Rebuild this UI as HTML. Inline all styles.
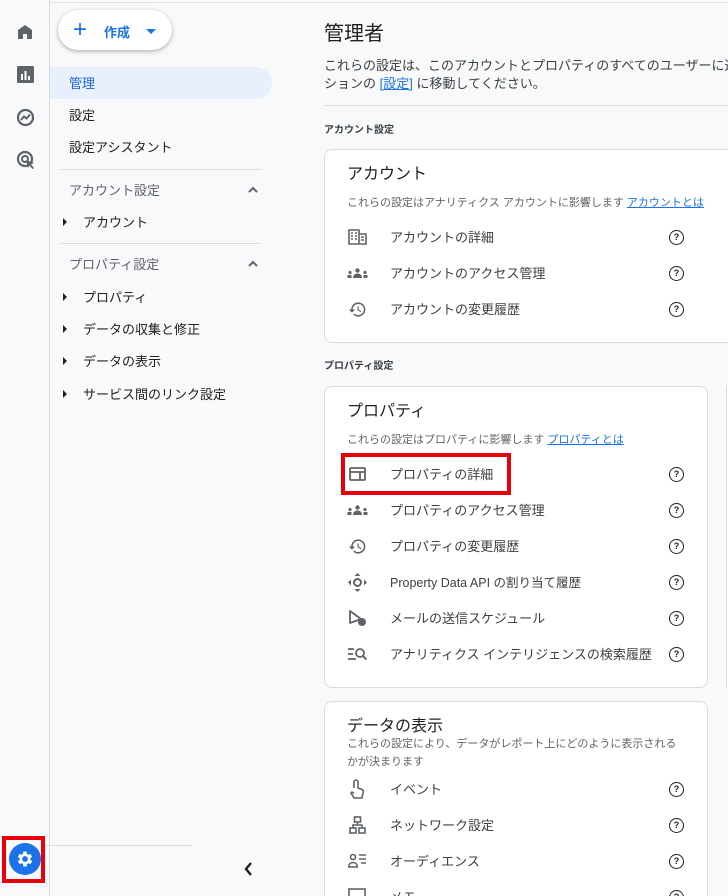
<!DOCTYPE html>
<html style="width:728px;height:896px;overflow:hidden"><head><meta charset="utf-8"><style>
*{margin:0;padding:0;box-sizing:border-box}
body{width:728px;height:896px;overflow:hidden;background:#f8f9fa;font-family:"Liberation Sans","Noto Sans CJK JP",sans-serif;color:#202124;position:relative}
.a{position:absolute;white-space:nowrap}
.rail{left:0;top:0;width:50px;height:896px;border-right:1px solid #dadce0;background:#f8f9fa}
.topline{left:0;top:0;width:728px;height:3px;border-bottom:1px solid #e3e3e3}
.s{font-size:13px;line-height:16px;margin-top:1px}
.g{color:#5f6368}
.tri{width:0;height:0;border-top:4px solid transparent;border-bottom:4px solid transparent;border-left:4px solid #202124}
.card{background:#fff;border:1px solid #dadce0;border-radius:8px}
.row{font-size:13px;color:#3c4043;line-height:16px;margin-top:1px}
.help{width:15px;height:15px;border:1.7px solid #202124;border-radius:50%;font-size:9px;font-weight:bold;text-align:center;line-height:12px;color:#202124;background:#fff}
</style></head><body>
<div class="a topline"></div>
<div class="a rail"></div>
<svg class="a" style="left:16px;top:23px" width="18" height="18" viewBox="0 0 18 18"><path d="M9 2 L2 7 V16 H7 V11 H11 V16 H16 V7 Z" fill="#5f6368"/></svg>
<svg class="a" style="left:17px;top:66px" width="17" height="17" viewBox="0 0 17 17"><rect x="0" y="0" width="17" height="17" rx="1.5" fill="#5f6368"/><rect x="4" y="8" width="2" height="6" fill="#fff"/><rect x="7.5" y="5" width="2" height="9" fill="#fff"/><rect x="11" y="10" width="2" height="4" fill="#fff"/></svg>
<svg class="a" style="left:16px;top:108px" width="19" height="19" viewBox="0 0 19 19"><circle cx="9.5" cy="9.5" r="7.5" fill="none" stroke="#5f6368" stroke-width="2.2"/><path d="M5 12 L8 8.5 L10.5 10.5 L14 6.5" fill="none" stroke="#5f6368" stroke-width="2"/></svg>
<svg class="a" style="left:16px;top:150px" width="20" height="20" viewBox="0 0 20 20"><circle cx="9" cy="9" r="7" fill="none" stroke="#5f6368" stroke-width="2.2"/><circle cx="9" cy="9" r="3" fill="none" stroke="#5f6368" stroke-width="2"/><path d="M10 10 L18 13 L15 14.5 L18 18 L16.5 19 L13.5 15.5 L12 18 Z" fill="#5f6368"/></svg>
<div class="a" style="left:2px;top:836px;width:43px;height:47px;border:4px solid #e8000b"></div>
<div class="a" style="left:9px;top:843px;width:32px;height:32px;border-radius:50%;background:#1a73e8"></div>
<svg class="a" style="left:15px;top:849px" width="20" height="20" viewBox="0 0 24 24"><path fill="#fff" d="M19.4 13a7.5 7.5 0 000-2l2.1-1.6-2-3.5-2.5 1a7 7 0 00-1.7-1L15 3h-4l-.4 2.9a7 7 0 00-1.7 1l-2.5-1-2 3.5L6.6 11a7.5 7.5 0 000 2l-2.1 1.6 2 3.5 2.5-1a7 7 0 001.7 1L11 21h4l.4-2.9a7 7 0 001.7-1l2.5 1 2-3.5zM13 15.5a3.5 3.5 0 110-7 3.5 3.5 0 010 7z" transform="translate(-1 0)"/></svg>
<div class="a" style="left:58px;top:10px;width:114px;height:40px;border-radius:20px;background:#fff;box-shadow:0 1px 3px rgba(60,64,67,.3),0 2px 6px rgba(60,64,67,.15)"></div>
<div class="a" style="left:73px;top:18px;font-size:24px;line-height:24px;color:#1a73e8;font-weight:300">+</div>
<div class="a" style="left:104px;top:22px;font-size:13px;color:#1a73e8;font-weight:bold">作成</div>
<div class="a" style="left:146px;top:29px;width:0;height:0;border-left:5px solid transparent;border-right:5px solid transparent;border-top:5px solid #1a73e8"></div>
<div class="a" style="left:50px;top:67px;width:222px;height:32px;background:#e8f0fe;border-radius:0 16px 16px 0"></div>
<div class="a s" style="left:69px;top:75px;color:#1967d2">管理</div>
<div class="a s" style="left:69px;top:107px">設定</div>
<div class="a s" style="left:69px;top:139px">設定アシスタント</div>
<div class="a" style="left:61px;top:169px;width:200px;border-top:1px solid #dadce0"></div>
<div class="a s g" style="left:69px;top:182px">アカウント設定</div>
<svg class="a" style="left:248px;top:186px" width="10" height="7" viewBox="0 0 10 7"><path d="M1 6 L5 2 L9 6" fill="none" stroke="#5f6368" stroke-width="2"/></svg>
<div class="a tri" style="left:63px;top:218px"></div>
<div class="a s" style="left:83px;top:214px">アカウント</div>
<div class="a" style="left:61px;top:243px;width:200px;border-top:1px solid #dadce0"></div>
<div class="a s g" style="left:69px;top:256px">プロパティ設定</div>
<svg class="a" style="left:248px;top:260px" width="10" height="7" viewBox="0 0 10 7"><path d="M1 6 L5 2 L9 6" fill="none" stroke="#5f6368" stroke-width="2"/></svg>
<div class="a tri" style="left:63px;top:293px"></div><div class="a s" style="left:83px;top:289px">プロパティ</div>
<div class="a tri" style="left:63px;top:325px"></div><div class="a s" style="left:83px;top:321px">データの収集と修正</div>
<div class="a tri" style="left:63px;top:357px"></div><div class="a s" style="left:83px;top:353px">データの表示</div>
<div class="a tri" style="left:63px;top:390px"></div><div class="a s" style="left:83px;top:386px">サービス間のリンク設定</div>
<div class="a" style="left:45px;top:845px;width:148px;border-top:1px solid #dadce0"></div>
<svg class="a" style="left:243px;top:862px" width="10" height="14" viewBox="0 0 10 14"><path d="M8 1 L3 7 L8 13" fill="none" stroke="#202124" stroke-width="2.4"/></svg>
<div class="a" style="left:324px;top:22px;font-size:20px;line-height:24px">管理者</div>
<div class="a" style="left:324px;top:57px;font-size:13px;line-height:18px;color:#3c4043">これらの設定は、このアカウントとプロパティのすべてのユーザーに適用<br>ションの <span style="color:#1a73e8;text-decoration:underline">[設定]</span> に移動してください。</div>
<div class="a" style="left:324px;top:105px;width:404px;border-top:1px solid #dadce0"></div>
<div class="a" style="left:324px;top:121px;font-size:10px;font-weight:bold;color:#3c4043">アカウント設定</div>
<div class="a card" style="left:324px;top:149px;width:420px;height:194px"></div>
<div class="a" style="left:347px;top:165px;font-size:16px;line-height:20px">アカウント</div>
<div class="a" style="left:347px;top:194px;font-size:11px;color:#5f6368">これらの設定はアナリティクス アカウントに影響します <span style="color:#1a73e8;text-decoration:underline">アカウントとは</span></div>
<svg class="a" style="left:348px;top:229px" width="19" height="16" viewBox="0 0 19 16"><path d="M1 1h10v14H1z M11 5h7v10h-7z" fill="none" stroke="#5f6368" stroke-width="1.6"/><path d="M3 4h2M7 4h2M3 7h2M7 7h2M3 10h2M7 10h2M13 8h3M13 11h3" stroke="#5f6368" stroke-width="1.6"/></svg>
<div class="a row" style="left:390px;top:229px">アカウントの詳細</div>
<svg class="a" style="left:347px;top:268px" width="21" height="10" viewBox="0 0 21 10"><circle cx="10.5" cy="2.5" r="2.2" fill="#5f6368"/><path d="M6 10c0-3 2-4.5 4.5-4.5S15 7 15 10z" fill="#5f6368"/><circle cx="3" cy="4.5" r="1.6" fill="#5f6368"/><circle cx="18" cy="4.5" r="1.6" fill="#5f6368"/><rect x="0.5" y="7" width="4" height="3" fill="#5f6368"/><rect x="16.5" y="7" width="4" height="3" fill="#5f6368"/></svg>
<div class="a row" style="left:390px;top:265px">アカウントのアクセス管理</div>
<svg class="a" style="left:348px;top:300px" width="19" height="19" viewBox="0 0 24 24"><path d="M13 3a9 9 0 00-9 9H1l4 4 4-4H6a7 7 0 117 7 7 7 0 01-5-2l-1.4 1.4A9 9 0 1013 3zm-1 5v5l4.3 2.5.7-1.2-3.5-2.1V8z" fill="#5f6368"/></svg>
<div class="a row" style="left:390px;top:301px">アカウントの変更履歴</div>
<div class="a help" style="left:669px;top:230px">?</div>
<div class="a help" style="left:669px;top:266px">?</div>
<div class="a help" style="left:669px;top:302px">?</div>
<div class="a" style="left:324px;top:357px;font-size:10px;font-weight:bold;color:#3c4043">プロパティ設定</div>
<div class="a card" style="left:324px;top:386px;width:384px;height:302px"></div>
<div class="a" style="left:726px;top:386px;width:10px;height:302px;border-left:1px solid #dadce0;background:#fff"></div>
<div class="a" style="left:347px;top:402px;font-size:16px;line-height:20px">プロパティ</div>
<div class="a" style="left:347px;top:431px;font-size:11px;color:#5f6368">これらの設定はプロパティに影響します <span style="color:#1a73e8;text-decoration:underline">プロパティとは</span></div>
<div class="a" style="left:341px;top:453px;width:170px;height:42px;border:4px solid #e8000b"></div>
<svg class="a" style="left:349px;top:467px" width="17" height="14" viewBox="0 0 17 14"><rect x="1" y="1" width="15" height="12" rx="1" fill="none" stroke="#5f6368" stroke-width="1.8"/><path d="M1 5h15M11 5v8" stroke="#5f6368" stroke-width="1.8"/></svg>
<div class="a row" style="left:390px;top:466px">プロパティの詳細</div>
<svg class="a" style="left:347px;top:505px" width="21" height="10" viewBox="0 0 21 10"><circle cx="10.5" cy="2.5" r="2.2" fill="#5f6368"/><path d="M6 10c0-3 2-4.5 4.5-4.5S15 7 15 10z" fill="#5f6368"/><circle cx="3" cy="4.5" r="1.6" fill="#5f6368"/><circle cx="18" cy="4.5" r="1.6" fill="#5f6368"/><rect x="0.5" y="7" width="4" height="3" fill="#5f6368"/><rect x="16.5" y="7" width="4" height="3" fill="#5f6368"/></svg>
<div class="a row" style="left:390px;top:502px">プロパティのアクセス管理</div>
<svg class="a" style="left:348px;top:537px" width="19" height="19" viewBox="0 0 24 24"><path d="M13 3a9 9 0 00-9 9H1l4 4 4-4H6a7 7 0 117 7 7 7 0 01-5-2l-1.4 1.4A9 9 0 1013 3zm-1 5v5l4.3 2.5.7-1.2-3.5-2.1V8z" fill="#5f6368"/></svg>
<div class="a row" style="left:390px;top:538px">プロパティの変更履歴</div>
<svg class="a" style="left:348px;top:573px" width="19" height="19" viewBox="0 0 19 19"><path d="M9.5 0l3 3h-6zM9.5 19l3-3h-6zM0 9.5l3-3v6zM19 9.5l-3-3v6z" fill="#5f6368"/><circle cx="9.5" cy="9.5" r="3.5" fill="none" stroke="#5f6368" stroke-width="2"/></svg>
<div class="a row" style="left:390px;top:574px;font-size:12.5px">Property Data API の割り当て履歴</div>
<svg class="a" style="left:348px;top:609px" width="19" height="18" viewBox="0 0 19 18"><path d="M2 2v12l11-4z" fill="none" stroke="#5f6368" stroke-width="1.8" stroke-linejoin="round"/><circle cx="14" cy="13" r="4" fill="#5f6368"/></svg>
<div class="a row" style="left:390px;top:610px">メールの送信スケジュール</div>
<svg class="a" style="left:348px;top:647px" width="19" height="14" viewBox="0 0 19 14"><path d="M0 2h6M0 7h5M0 12h8" stroke="#5f6368" stroke-width="1.8"/><circle cx="12" cy="6" r="4" fill="none" stroke="#5f6368" stroke-width="1.8"/><path d="M15 9l3.5 3.5" stroke="#5f6368" stroke-width="2"/></svg>
<div class="a row" style="left:390px;top:646px">アナリティクス インテリジェンスの検索履歴</div>
<div class="a help" style="left:669px;top:467px">?</div>
<div class="a help" style="left:669px;top:503px">?</div>
<div class="a help" style="left:669px;top:539px">?</div>
<div class="a help" style="left:669px;top:575px">?</div>
<div class="a help" style="left:669px;top:611px">?</div>
<div class="a help" style="left:669px;top:647px">?</div>
<div class="a card" style="left:324px;top:701px;width:384px;height:210px"></div>
<div class="a" style="left:347px;top:717px;font-size:16px;line-height:20px">データの表示</div>
<div class="a" style="left:347px;top:735px;font-size:11px;line-height:18px;color:#5f6368">これらの設定により、データがレポート上にどのように表示される<br>かが決まります</div>
<svg class="a" style="left:349px;top:779px" width="16" height="20" viewBox="0 0 16 20"><path d="M5 9V3a2 2 0 014 0v6l4 1.5c1 .5 1.5 1.5 1.3 2.5L13 19H5l-3-5 1-1 2 1.5" fill="none" stroke="#5f6368" stroke-width="1.6"/></svg>
<div class="a row" style="left:390px;top:781px">イベント</div>
<svg class="a" style="left:349px;top:816px" width="17" height="18" viewBox="0 0 17 18"><rect x="5.5" y="1" width="6" height="5" fill="none" stroke="#5f6368" stroke-width="1.6"/><rect x="1" y="12" width="6" height="5" fill="none" stroke="#5f6368" stroke-width="1.6"/><rect x="10" y="12" width="6" height="5" fill="none" stroke="#5f6368" stroke-width="1.6"/><path d="M8.5 6v3M4 12V9h9v3" fill="none" stroke="#5f6368" stroke-width="1.6"/></svg>
<div class="a row" style="left:390px;top:817px">ネットワーク設定</div>
<svg class="a" style="left:348px;top:853px" width="19" height="15" viewBox="0 0 19 15"><circle cx="5" cy="4" r="2.5" fill="none" stroke="#5f6368" stroke-width="1.6"/><path d="M0.8 14c0-3 2-4.5 4.2-4.5S9.2 11 9.2 14z" fill="none" stroke="#5f6368" stroke-width="1.6"/><path d="M11 2h7M11 6h7M13 10h5" stroke="#5f6368" stroke-width="1.6"/></svg>
<div class="a row" style="left:390px;top:853px">オーディエンス</div>
<svg class="a" style="left:348px;top:888px" width="18" height="8" viewBox="0 0 18 8"><rect x="1" y="1" width="16" height="12" fill="none" stroke="#5f6368" stroke-width="1.6"/></svg>
<div class="a row" style="left:390px;top:889px">メモ</div>
<div class="a help" style="left:669px;top:782px">?</div>
<div class="a help" style="left:669px;top:818px">?</div>
<div class="a help" style="left:669px;top:854px">?</div>
<div class="a help" style="left:669px;top:890px">?</div>
</body></html>
